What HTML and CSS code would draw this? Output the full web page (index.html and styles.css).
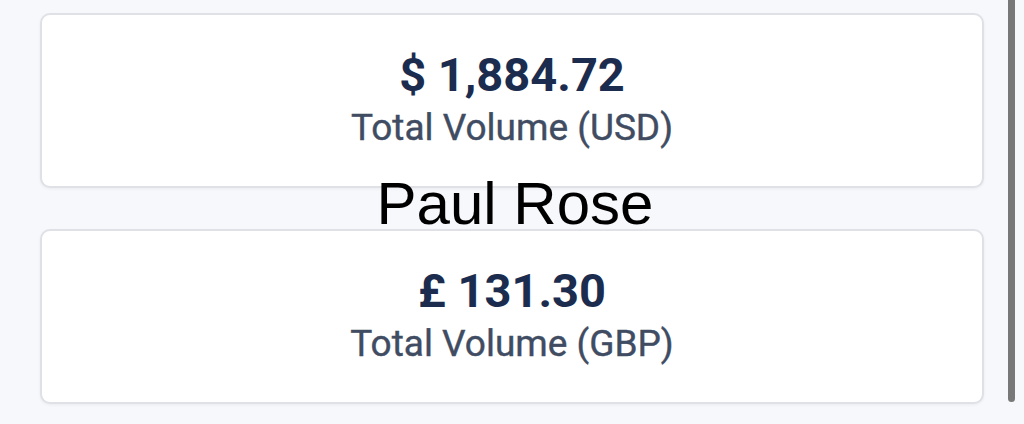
FILE: index.html
```html
<!DOCTYPE html>
<html lang="en">
<head>
<meta charset="utf-8">
<title>Totals</title>
<link rel="stylesheet" href="styles.css">
</head>
<body>
<main class="page">
  <section class="card">
    <div class="amount">$ 1,884.72</div>
    <div class="label">Total Volume (USD)</div>
  </section>
  <section class="card">
    <div class="amount">£ 131.30</div>
    <div class="label">Total Volume (GBP)</div>
  </section>
  <div class="name">Paul Rose</div>
  <div class="scrollbar"></div>
</main>
</body>
</html>
```
FILE: styles.css
```css
html, body {
  margin: 0;
  padding: 0;
  background: #f7f8fc;
  height: 100%;
  overflow: hidden;
}

.page {
  position: relative;
  height: 424px;
  box-sizing: border-box;
  padding: 13px 40px 0 40px;
  display: flex;
  flex-direction: column;
  gap: 41px;
  font-family: Roboto, "Liberation Sans", sans-serif;
}

.card {
  background: #ffffff;
  border: 2px solid #dfe1e6;
  border-radius: 10px;
  box-shadow: 0 1px 3px rgba(20, 30, 50, 0.06);
  height: 175px;
  box-sizing: border-box;
  padding-top: 32px;
  display: flex;
  flex-direction: column;
  align-items: center;
  gap: 3px;
}

.amount {
  font-size: 47px;
  line-height: 56px;
  font-weight: 700;
  color: #1b2c4e;
}

.label {
  font-size: 37px;
  line-height: 44px;
  font-weight: 400;
  color: #404c62;
  -webkit-text-stroke: 0.4px #404c62;
}

.name {
  position: absolute;
  left: 0;
  right: 0;
  top: 174px;
  text-align: center;
  padding-left: 6px;
  font-family: "Liberation Sans", Arial, sans-serif;
  font-size: 60px;
  line-height: 60px;
  color: #000000;
}

.scrollbar {
  position: absolute;
  left: 1008px;
  top: -10px;
  width: 7px;
  height: 412px;
  border-radius: 4px;
  background: #787878;
}
```
